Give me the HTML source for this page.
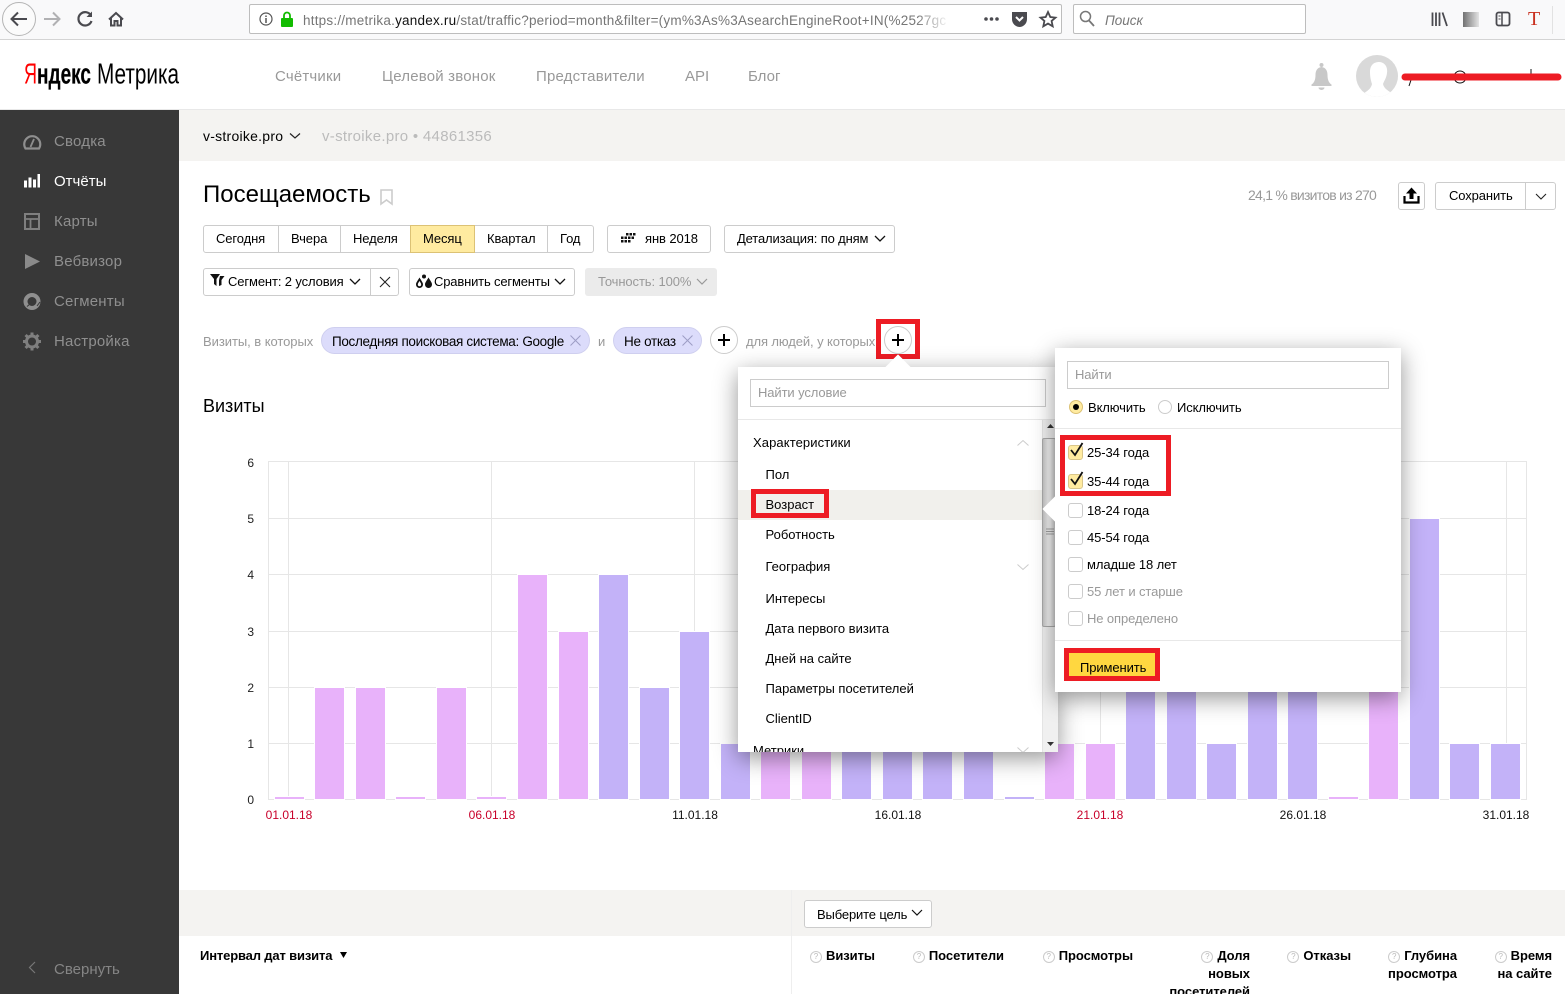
<!DOCTYPE html>
<html lang="ru"><head><meta charset="utf-8"><title>Посещаемость</title>
<style>
*{box-sizing:border-box}
html,body{margin:0;padding:0;width:1565px;height:994px;overflow:hidden;background:#fff}
body{position:relative;font-family:"Liberation Sans",Arial,sans-serif;font-size:13px;color:#000}
.a{position:absolute}
.t{position:absolute;white-space:nowrap;line-height:18px;height:18px}
.b{position:absolute;background:#fff;border:1px solid #ccc;border-radius:3px}
.g{color:#999}
svg{position:absolute;overflow:visible}
.red{position:absolute;border:5px solid #ed1c24}
.ck{position:absolute;width:15px;height:15px;border:1px solid #ccc;border-radius:3px;background:#fff;left:1068px}
.ck.on{background:#ffeba0;border-color:#d9c68a}
.m{font-size:13px;letter-spacing:-.1px}
.side{color:#8f8f8f;font-size:15px;left:54px;letter-spacing:.2px}
.nav{color:#999;font-size:15px;top:68px;letter-spacing:.18px}
.th{font-weight:bold;font-size:13px;text-align:right;line-height:18px;position:absolute;letter-spacing:-.05px}
.q{display:inline-block;width:12px;height:12px;border:1px solid #ccc;border-radius:50%;font-size:8px;line-height:10px;text-align:center;color:#bbb;font-weight:normal;vertical-align:1px;margin-right:4px}
#ch rect{stroke:#fff;stroke-width:1}
</style></head><body>

<!-- browser bar -->
<div class="a" style="left:0;top:0;width:1565px;height:40px;background:#f9f9fa;border-bottom:1px solid #d4d4d4"></div>
<div class="a" style="left:2px;top:2px;width:34px;height:34px;border:1px solid #b5b5b5;border-radius:50%;background:#fbfbfb"></div>
<svg style="left:0;top:0" width="140" height="40" fill="none" stroke-width="2">
<path d="M27 19H12M18 12.500L11.500 19L18 25.500" stroke="#4a4a4f"/>
<path d="M44 19H59M53 12.500L59.500 19L53 25.500" stroke="#b1b1b3"/>
<path d="M91 15.500A6.700 6.700 0 1 0 91.500 21" stroke="#4a4a4f" stroke-width="2.200"/>
<path d="M92 11.500V17H86.500Z" fill="#4a4a4f"/>
<path d="M109 19.500L116 13L123 19.500M111 18V25.500H114.500V21H117.500V25.500H121V18" stroke="#4a4a4f" stroke-width="2"/>
</svg>
<div class="b" style="left:249px;top:4px;width:813px;height:30px;border-radius:2px;border-color:#bdbdbd"></div>
<svg style="left:258px;top:11px" width="40" height="18" fill="none">
<circle cx="8" cy="8" r="6" stroke="#555" stroke-width="1.200"/><path d="M8 7V12M8 4.500V6" stroke="#555" stroke-width="1.500"/>
<path d="M26 7V4.500A3 3 0 0 1 32 4.500V7" stroke="#12bc00" stroke-width="1.800"/><rect x="23" y="7" width="12" height="9" rx="1" fill="#12bc00"/>
</svg>
<div class="t" style="left:303px;top:12px;width:645px;overflow:hidden;color:#767676;font-size:13.500px;letter-spacing:.22px">https://metrika.<span style="color:#111">yandex.ru</span>/stat/traffic?period=month&amp;filter=(ym%3As%3AsearchEngineRoot+IN(%2527gc</div>
<div class="a" style="left:916px;top:8px;width:34px;height:22px;background:linear-gradient(90deg,rgba(255,255,255,0),#fff)"></div>
<svg style="left:980px;top:8px" width="80" height="24" fill="none">
<circle cx="6" cy="11" r="1.800" fill="#4a4a4f"/><circle cx="11.500" cy="11" r="1.800" fill="#4a4a4f"/><circle cx="17" cy="11" r="1.800" fill="#4a4a4f"/>
<path d="M32 4H47V11C47 16 43 19 39.500 19C36 19 32 16 32 11Z" fill="#4a4a4f"/><path d="M36 9L39.500 12.500L43 9" stroke="#fff" stroke-width="2"/>
<path d="M68 4L70.300 9L75.500 9.600L71.600 13L72.700 18.300L68 15.600L63.300 18.300L64.400 13L60.500 9.600L65.700 9Z" stroke="#4a4a4f" stroke-width="1.800"/>
</svg>
<div class="b" style="left:1073px;top:4px;width:233px;height:30px;border-radius:2px;border-color:#bdbdbd"></div>
<svg style="left:1078px;top:9px" width="22" height="22" fill="none"><circle cx="7.500" cy="7.500" r="5" stroke="#777" stroke-width="1.500"/><path d="M11 11.500L16 17" stroke="#777" stroke-width="1.800"/></svg>
<div class="t" style="left:1105px;top:12px;color:#777;font-style:italic;font-size:13.500px">Поиск</div>
<svg style="left:1425px;top:8px" width="125" height="24" fill="none">
<path d="M7.500 4.500V18M11 4.500V18M14.500 4.500V18M17.500 4.500L22 18" stroke="#4a4a4f" stroke-width="1.800"/>
<defs><linearGradient id="gs" x1="0" x2="1" y1="0" y2="0"><stop offset="0" stop-color="#444"/><stop offset="1" stop-color="#ddd"/></linearGradient></defs>
<rect x="38" y="4" width="16" height="15" fill="url(#gs)" opacity=".75"/>
<rect x="71.500" y="4.500" width="13" height="13" rx="2" stroke="#4a4a4f" stroke-width="1.800"/><path d="M77 5V17" stroke="#4a4a4f" stroke-width="1.500"/><path d="M73.500 8H75.500M73.500 11H75.500" stroke="#4a4a4f"/>
</svg>
<div class="t" style="left:1528px;top:8px;font-family:'Liberation Serif',serif;font-size:20px;line-height:22px;height:22px;color:#c9301f">T</div>
<div class="a" style="left:1552px;top:6px;width:1px;height:28px;background:#e2e2e2"></div>

<!-- header -->
<div class="a" style="left:0;top:109px;width:1565px;height:1px;background:#e8e8e8"></div>
<svg style="left:0;top:50px" width="200" height="50">
<text x="24" y="33.500" font-family="'Liberation Sans',sans-serif" font-size="29" fill="#f00" textLength="13" lengthAdjust="spacingAndGlyphs">Я</text>
<text x="37" y="33.500" font-family="'Liberation Sans',sans-serif" font-size="29" font-weight="bold" fill="#000" textLength="54" lengthAdjust="spacingAndGlyphs" stroke="#000" stroke-width=".2">ндекс</text>
<text x="97" y="33.500" font-family="'Liberation Sans',sans-serif" font-size="29" fill="#000" textLength="82" lengthAdjust="spacingAndGlyphs">Метрика</text>
</svg>
<div class="t nav" style="left:275px">Счётчики</div>
<div class="t nav" style="left:382px">Целевой звонок</div>
<div class="t nav" style="left:536px">Представители</div>
<div class="t nav" style="left:685px;letter-spacing:0">API</div>
<div class="t nav" style="left:748px;letter-spacing:0">Блог</div>
<svg style="left:1305px;top:56px" width="100" height="44">
<path d="M16.500 7A2 2 0 0 0 16.500 11C12 11.500 10.500 15 10.500 19C10.500 24 9 27 6.500 28.500V30H26.500V28.500C24 27 22.500 24 22.500 19C22.500 15 21 11.500 16.500 11A2 2 0 0 0 16.500 7Z" fill="#c8c8c8"/>
<path d="M13.500 31.500H19.500A3 2.500 0 0 1 13.500 31.500Z" fill="#c8c8c8"/>
<defs><clipPath id="av"><circle cx="72" cy="20" r="21"/></clipPath></defs>
<circle cx="72" cy="20" r="21" fill="#d9d9d9"/>
<g clip-path="url(#av)"><path d="M65 16C65 8 70 6 74 6C79 6 83 10 82 17C81.500 22 79 25 78 28C79 33 84 35 88 38V44H58V38C62 35 66 33 67 28C66 25 65 21 65 16Z" fill="#fff"/></g>
</svg>
<svg style="left:1400px;top:66px" width="165" height="24" fill="none">
<circle cx="60" cy="11" r="6" stroke="#111" stroke-width="1"/><path d="M131 3V8M11 14L9 20" stroke="#111"/>
<path d="M5 11H158" stroke="#ed1c24" stroke-width="7" stroke-linecap="round"/>
</svg>

<!-- sidebar -->
<div class="a" style="left:0;top:110px;width:179px;height:884px;background:#383838"></div>
<svg style="left:20px;top:130px" width="26" height="224" fill="none">
<path d="M5.500 18.500A8 8 0 1 1 19 18.500Z" stroke="#8f8f8f" stroke-width="2.200"/><path d="M10.500 17L14 9" stroke="#8f8f8f" stroke-width="1.800"/>
<path d="M4 51H7V58H4ZM8.500 48H11.500V58H8.500ZM13 50H16V58H13ZM17.500 44.500H20V58H17.500Z" fill="#fff" transform="translate(0 -.5)"/>
<rect x="5" y="84" width="14" height="15" stroke="#7f7f7f" stroke-width="2"/><path d="M5 89H19M10.500 89V99" stroke="#7f7f7f" stroke-width="1.800"/>
<path d="M5 124L20 131.500L5 139Z" fill="#8a8a8a"/>
<circle cx="12" cy="171.500" r="6.500" stroke="#8f8f8f" stroke-width="4"/><path d="M17 176L20 172" stroke="#383838" stroke-width="1"/><path d="M7 176.500L10 174" stroke="#383838" stroke-width="1"/>
<circle cx="12" cy="211.500" r="5.500" stroke="#7f7f7f" stroke-width="3"/><path d="M12 202.500V205.500M12 217.500V220.500M3 211.500H6M18 211.500H21M5.600 205L7.800 207.300M16.200 215.700L18.400 218M18.400 205L16.200 207.300M7.800 215.700L5.600 218" stroke="#7f7f7f" stroke-width="3"/>
</svg>
<div class="t side" style="top:133px">Сводка</div>
<div class="t side" style="top:173px;color:#fff;letter-spacing:0">Отчёты</div>
<div class="t side" style="top:213px">Карты</div>
<div class="t side" style="top:253px">Вебвизор</div>
<div class="t side" style="top:293px">Сегменты</div>
<div class="t side" style="top:333px">Настройка</div>
<svg style="left:28px;top:961px" width="10" height="14" fill="none"><path d="M7 1L1.500 6.500L7 12" stroke="#777" stroke-width="1.200"/></svg>
<div class="t side" style="top:961px;color:#858585;letter-spacing:0">Свернуть</div>

<!-- top strip -->
<div class="a" style="left:179px;top:110px;width:1386px;height:51px;background:#f4f3f1"></div>
<div class="t" style="left:203px;top:127px;font-size:14px;letter-spacing:.25px">v-stroike.pro</div>
<svg style="left:289px;top:132px" width="12" height="8" fill="none"><path d="M1 1.500L6 6L11 1.500" stroke="#222" stroke-width="1.200"/></svg>
<div class="t" style="left:322px;top:128px;font-size:15px;color:#bbb;letter-spacing:.3px">v-stroike.pro • 44861356</div>

<!-- title -->
<div class="t" style="left:203px;top:179px;font-size:24px;line-height:32px;height:32px">Посещаемость</div>
<svg style="left:380px;top:189px" width="13" height="17" fill="none"><path d="M1 1H12V15L6.500 11L1 15Z" stroke="#ccc" stroke-width="1.600"/></svg>
<div class="t g" style="left:1248px;top:186px;font-size:14px;letter-spacing:-.75px">24,1 % визитов из 270</div>
<div class="b" style="left:1398px;top:182px;width:27px;height:28px"></div>
<svg style="left:1402px;top:186px" width="20" height="20"><path d="M9.500 1.500L15 7.500H11.500V13H7.500V7.500H4Z" fill="#000"/><path d="M2.500 10V16.500H16.500V10" fill="none" stroke="#000" stroke-width="2.200"/></svg>
<div class="b" style="left:1435px;top:182px;width:121px;height:28px"></div>
<div class="a" style="left:1525px;top:183px;width:1px;height:26px;background:#ccc"></div>
<div class="t m" style="left:1449px;top:187px">Сохранить</div>
<svg style="left:1535px;top:193px" width="12" height="8" fill="none"><path d="M1 1L6 6L11 1" stroke="#222" stroke-width="1.100"/></svg>

<!-- period buttons -->
<div class="b" style="left:203px;top:225px;width:391px;height:28px"></div>
<div class="a" style="left:410px;top:225px;width:65px;height:28px;background:#ffeba0;border:1px solid #dcc275"></div>
<div class="a" style="left:278px;top:226px;width:1px;height:26px;background:#ccc"></div>
<div class="a" style="left:340px;top:226px;width:1px;height:26px;background:#ccc"></div>
<div class="a" style="left:547px;top:226px;width:1px;height:26px;background:#ccc"></div>
<div class="t m" style="left:216px;top:230px">Сегодня</div>
<div class="t m" style="left:291px;top:230px">Вчера</div>
<div class="t m" style="left:353px;top:230px">Неделя</div>
<div class="t m" style="left:423px;top:230px">Месяц</div>
<div class="t m" style="left:487px;top:230px">Квартал</div>
<div class="t m" style="left:560px;top:230px">Год</div>
<div class="b" style="left:607px;top:225px;width:104px;height:28px"></div>
<svg style="left:620px;top:232px" width="16" height="13" fill="#111"><path d="M6 1h2.500v2.500H6zM9.500 1H12v2.500H9.500zM13 1h2.500v2.500H13zM1 4.500h2.500V7H1zM4.500 4.500H7V7H4.500zM8 4.500h2.500V7H8zM11.500 4.500H14V7h-2.500zM1 8h2.500v2.500H1zM4.500 8H7v2.500H4.500zM8 8h2.500v2.500H8z"/></svg>
<div class="t m" style="left:645px;top:230px">янв 2018</div>
<div class="b" style="left:724px;top:225px;width:171px;height:28px"></div>
<div class="t m" style="left:737px;top:230px;letter-spacing:-.15px">Детализация: по дням</div>
<svg style="left:874px;top:235px" width="12" height="8" fill="none"><path d="M1 1L6 6L11 1" stroke="#111" stroke-width="1.300"/></svg>

<!-- segment row -->
<div class="b" style="left:203px;top:268px;width:196px;height:28px"></div>
<div class="a" style="left:370px;top:269px;width:1px;height:26px;background:#ccc"></div>
<svg style="left:209px;top:273px" width="18" height="15"><path d="M1 1H11L7.500 6V13L5 11V6Z" fill="#111"/><path d="M11 3H15.500L12.500 7V12L10 13V7.500Z" fill="#111"/></svg>
<div class="t m" style="left:228px;top:273px;letter-spacing:-.12px">Сегмент: 2 условия</div>
<svg style="left:349px;top:278px" width="12" height="8" fill="none"><path d="M1 1L6 6L11 1" stroke="#111" stroke-width="1.300"/></svg>
<svg style="left:379px;top:276px" width="12" height="12" fill="none"><path d="M1 1L11 11M11 1L1 11" stroke="#222" stroke-width="1.100"/></svg>
<div class="b" style="left:409px;top:268px;width:166px;height:28px"></div>
<svg style="left:415px;top:274px" width="18" height="16" fill="#111"><path d="M4.500 3.500C6.500 7 8 8.500 8 10.500A3.500 3.500 0 0 1 1 10.500C1 8.500 2.500 7 4.500 3.500ZM4.500 7C3.500 8.800 2.800 9.500 2.800 10.500A1.700 1.700 0 0 0 6.200 10.500C6.200 9.500 5.500 8.800 4.500 7Z" fill-rule="evenodd"/><path d="M13.500 3.500C15.500 7 17 8.500 17 10.500A3.500 3.500 0 0 1 10 10.500C10 8.500 11.500 7 13.500 3.500Z"/><circle cx="9" cy="2.500" r="2"/></svg>
<div class="t m" style="left:434px;top:273px;letter-spacing:-.17px">Сравнить сегменты</div>
<svg style="left:554px;top:278px" width="12" height="8" fill="none"><path d="M1 1L6 6L11 1" stroke="#111" stroke-width="1.300"/></svg>
<div class="a" style="left:585px;top:268px;width:132px;height:28px;background:#ebebeb;border-radius:3px"></div>
<div class="t m" style="left:598px;top:273px;color:#999">Точность: 100%</div>
<svg style="left:696px;top:278px" width="12" height="8" fill="none"><path d="M1 1L6 6L11 1" stroke="#999" stroke-width="1.200"/></svg>

<!-- filters -->
<div class="t g" style="left:203px;top:333px;font-size:13px;letter-spacing:-.05px">Визиты, в которых</div>
<div class="a" style="left:321px;top:327px;width:269px;height:27px;border-radius:14px;background:#dcdcfb;border:1px solid #cfcfef"></div>
<div class="t" style="left:332px;top:333px;font-size:13.500px;letter-spacing:-.33px">Последняя поисковая система: Google</div>
<svg style="left:570px;top:335px" width="11" height="11" fill="none"><path d="M.5 .5L10.500 10.500M10.500 .5L.5 10.500" stroke="#9d9dc4"/></svg>
<div class="t g" style="left:598px;top:333px">и</div>
<div class="a" style="left:613px;top:327px;width:89px;height:27px;border-radius:14px;background:#dcdcfb;border:1px solid #cfcfef"></div>
<div class="t" style="left:624px;top:333px;font-size:13.500px;letter-spacing:-.3px">Не отказ</div>
<svg style="left:682px;top:335px" width="11" height="11" fill="none"><path d="M.5 .5L10.500 10.500M10.500 .5L.5 10.500" stroke="#9d9dc4"/></svg>
<div class="a" style="left:710px;top:326px;width:28px;height:28px;border:1px solid #ccc;border-radius:50%"></div>
<svg style="left:718px;top:334px" width="12" height="12"><path d="M6 0V12M0 6H12" stroke="#000" stroke-width="2"/></svg>
<div class="t g" style="left:746px;top:333px;font-size:13px;letter-spacing:-.1px">для людей, у которых</div>

<!-- chart -->
<div class="t" style="left:203px;top:395px;font-size:18px;line-height:22px;height:22px">Визиты</div>
<svg style="left:0;top:0" width="1565" height="994" id="ch" font-family="'Liberation Sans',sans-serif" font-size="12">
<g fill="none" stroke="#e6e6e6">
<path d="M268.500 461.500H1526.500V799.500H268.500Z"/>
<path d="M268 518.500H1527M268 574.500H1527M268 631.500H1527M268 687.500H1527M268 743.500H1527"/>
<path d="M288.500 461V799M491.500 461V799M694.500 461V799M897.500 461V799M1100.500 461V799M1303.500 461V799M1506.500 461V799"/>
</g>
<g>
<rect x="274.500" y="796.500" width="30" height="3" fill="#e8b2fa"/>
<rect x="314.500" y="687.500" width="30" height="112" fill="#e8b2fa"/>
<rect x="355.500" y="687.500" width="30" height="112" fill="#e8b2fa"/>
<rect x="395.500" y="796.500" width="30" height="3" fill="#e8b2fa"/>
<rect x="436.500" y="687.500" width="30" height="112" fill="#e8b2fa"/>
<rect x="476.500" y="796.500" width="30" height="3" fill="#e8b2fa"/>
<rect x="517.500" y="574.500" width="30" height="225" fill="#e8b2fa"/>
<rect x="558.500" y="631.500" width="30" height="168" fill="#e8b2fa"/>
<rect x="598.500" y="574.500" width="30" height="225" fill="#c3b2f8"/>
<rect x="639.500" y="687.500" width="30" height="112" fill="#c3b2f8"/>
<rect x="679.500" y="631.500" width="30" height="168" fill="#c3b2f8"/>
<rect x="720.500" y="743.500" width="30" height="56" fill="#c3b2f8"/>
<rect x="760.500" y="743.500" width="30" height="56" fill="#e8b2fa"/>
<rect x="801.500" y="743.500" width="30" height="56" fill="#e8b2fa"/>
<rect x="841.500" y="743.500" width="30" height="56" fill="#c3b2f8"/>
<rect x="882.500" y="743.500" width="30" height="56" fill="#c3b2f8"/>
<rect x="922.500" y="743.500" width="30" height="56" fill="#c3b2f8"/>
<rect x="963.500" y="743.500" width="30" height="56" fill="#c3b2f8"/>
<rect x="1004.500" y="796.500" width="30" height="3" fill="#c3b2f8"/>
<rect x="1044.500" y="743.500" width="30" height="56" fill="#e8b2fa"/>
<rect x="1085.500" y="743.500" width="30" height="56" fill="#e8b2fa"/>
<rect x="1125.500" y="631.500" width="30" height="168" fill="#c3b2f8"/>
<rect x="1166.500" y="631.500" width="30" height="168" fill="#c3b2f8"/>
<rect x="1206.500" y="743.500" width="30" height="56" fill="#c3b2f8"/>
<rect x="1247.500" y="631.500" width="30" height="168" fill="#c3b2f8"/>
<rect x="1287.500" y="631.500" width="30" height="168" fill="#c3b2f8"/>
<rect x="1328.500" y="796.500" width="30" height="3" fill="#e8b2fa"/>
<rect x="1368.500" y="631.500" width="30" height="168" fill="#e8b2fa"/>
<rect x="1409.500" y="518.500" width="30" height="281" fill="#c3b2f8"/>
<rect x="1449.500" y="743.500" width="30" height="56" fill="#c3b2f8"/>
<rect x="1490.500" y="743.500" width="30" height="56" fill="#c3b2f8"/>
</g>
<g fill="#222" text-anchor="end">
<text x="254" y="467">6</text><text x="254" y="523">5</text><text x="254" y="579">4</text><text x="254" y="636">3</text><text x="254" y="692">2</text><text x="254" y="748">1</text><text x="254" y="804">0</text>
</g>
<g text-anchor="middle">
<text x="289" y="819" fill="#c8002a">01.01.18</text>
<text x="492" y="819" fill="#c8002a">06.01.18</text>
<text x="695" y="819" fill="#111">11.01.18</text>
<text x="898" y="819" fill="#111">16.01.18</text>
<text x="1100" y="819" fill="#c8002a">21.01.18</text>
<text x="1303" y="819" fill="#111">26.01.18</text>
<text x="1506" y="819" fill="#111">31.01.18</text>
</g>
</svg>

<!-- table top -->
<div class="a" style="left:179px;top:890px;width:1386px;height:46px;background:#f4f3f1"></div>
<div class="a" style="left:791px;top:890px;width:1px;height:104px;background:#eee"></div>
<div class="b" style="left:804px;top:900px;width:128px;height:28px"></div>
<div class="t m" style="left:817px;top:906px;letter-spacing:-.15px">Выберите цель</div>
<svg style="left:911px;top:909px" width="12" height="8" fill="none"><path d="M1 1L6 6L11 1" stroke="#111" stroke-width="1.200"/></svg>
<div class="t" style="left:200px;top:947px;font-weight:bold;font-size:13px;letter-spacing:-.15px">Интервал дат визита</div>
<svg style="left:340px;top:952px" width="7" height="6"><path d="M0 0H7L3.500 6Z" fill="#000"/></svg>
<div class="a" style="left:0;top:0;width:1565px;height:994px;overflow:hidden">
<div class="th" style="left:790px;width:85px;top:947px"><span class="q">?</span>Визиты</div>
<div class="th" style="left:890px;width:114px;top:947px"><span class="q">?</span>Посетители</div>
<div class="th" style="left:1020px;width:113px;top:947px"><span class="q">?</span>Просмотры</div>
<div class="th" style="left:1150px;width:100px;top:947px"><span class="q">?</span>Доля<br>новых<br>посетителей</div>
<div class="th" style="left:1270px;width:81px;top:947px"><span class="q">?</span>Отказы</div>
<div class="th" style="left:1370px;width:87px;top:947px"><span class="q">?</span>Глубина<br>просмотра</div>
<div class="th" style="left:1480px;width:72px;top:947px"><span class="q">?</span>Время<br>на сайте</div>
</div>

<!-- red highlight around second plus -->
<div class="a" style="left:884px;top:326px;width:28px;height:28px;border:1px solid #ccc;border-radius:50%;background:#fff"></div>
<svg style="left:892px;top:334px" width="12" height="12"><path d="M6 0V12M0 6H12" stroke="#000" stroke-width="2"/></svg>
<div class="red" style="left:876px;top:319px;width:44px;height:40px"></div>

<!-- panel 1 -->
<div class="a" style="left:738px;top:367px;width:320px;height:385px;background:#fff;box-shadow:0 6px 22px rgba(0,0,0,.42)"></div>
<div class="a" style="left:889px;top:358px;width:18px;height:18px;background:#fff;transform:rotate(45deg);clip-path:polygon(0 0,100% 0,0 100%);box-shadow:0 0 3px #ddd"></div>
<div class="a" style="left:738px;top:367px;width:320px;height:385px;overflow:hidden">
<div class="a" style="left:12px;top:12px;width:296px;height:28px;border:1px solid #ccc"></div>
<div class="t m" style="left:20px;top:17px;color:#999">Найти условие</div>
<div class="a" style="left:0;top:52px;width:320px;height:1px;background:#e8e8e8"></div>
<div class="a" style="left:0;top:123px;width:304px;height:30px;background:#f1f0ec"></div>
<div class="t" style="left:15px;top:67px;letter-spacing:.1px">Характеристики</div>
<svg style="left:279px;top:72px" width="12" height="8" fill="none"><path d="M.5 6.500L6 1.500L11.500 6.500" stroke="#ccc"/></svg>
<div class="t" style="left:27.500px;top:99px">Пол</div>
<div class="t" style="left:27.500px;top:129px">Возраст</div>
<div class="t" style="left:27.500px;top:159px">Роботность</div>
<div class="t" style="left:27.500px;top:191px">География</div>
<svg style="left:279px;top:196px" width="12" height="8" fill="none"><path d="M.5 1.500L6 6.500L11.500 1.500" stroke="#ccc"/></svg>
<div class="t" style="left:27.500px;top:223px">Интересы</div>
<div class="t" style="left:27.500px;top:253px">Дата первого визита</div>
<div class="t" style="left:27.500px;top:283px">Дней на сайте</div>
<div class="t" style="left:27.500px;top:313px">Параметры посетителей</div>
<div class="t" style="left:27.500px;top:343px">ClientID</div>
<div class="t" style="left:15px;top:375px">Метрики</div>
<svg style="left:279px;top:379px" width="12" height="8" fill="none"><path d="M.5 1.500L6 6.500L11.500 1.500" stroke="#ccc"/></svg>
<!-- scrollbar -->
<div class="a" style="left:304px;top:53px;width:16px;height:332px;background:#f0f0f0;border-left:1px solid #e4e4e4"></div>
<div class="a" style="left:304px;top:71px;width:14px;height:189px;background:linear-gradient(90deg,#c4c4c4,#eee 40%,#f2f2f2 60%,#ccc);border:1px solid #a9a9a9;border-radius:2px"></div>
<svg style="left:304px;top:53px" width="16" height="332"><path d="M5 8L8.500 4L12 8Z" fill="#333"/><path d="M5 322H12L8.500 326Z" fill="#333"/><path d="M4 109H12M4 111.500H12M4 114H12" stroke="#888" stroke-width=".8"/></svg>
</div>
<div class="red" style="left:751px;top:489px;width:78px;height:29px"></div>

<!-- panel 2 -->
<div class="a" style="left:1055px;top:348px;width:346px;height:344px;background:#fff;box-shadow:0 6px 22px rgba(0,0,0,.42)"></div>
<div class="a" style="left:1046px;top:500px;width:18px;height:18px;background:#fff;transform:rotate(45deg);clip-path:polygon(0 100%,0 0,100% 100%)"></div>
<div class="a" style="left:1067px;top:361px;width:322px;height:28px;border:1px solid #ccc"></div>
<div class="t m" style="left:1075px;top:366px;color:#999">Найти</div>
<div class="a" style="left:1069px;top:400px;width:14px;height:14px;border-radius:50%;background:#ffeba0;border:1px solid #dcc275"></div>
<div class="a" style="left:1073px;top:404px;width:6px;height:6px;border-radius:50%;background:#000"></div>
<div class="t" style="left:1088px;top:399px;letter-spacing:-.1px">Включить</div>
<div class="a" style="left:1158px;top:400px;width:14px;height:14px;border-radius:50%;background:#fff;border:1px solid #ccc"></div>
<div class="t" style="left:1177px;top:399px;letter-spacing:-.1px">Исключить</div>
<div class="a" style="left:1055px;top:428px;width:346px;height:1px;background:#e8e8e8"></div>
<div class="ck on" style="top:445px"></div>
<div class="ck on" style="top:474px"></div>
<svg style="left:1068px;top:441px" width="20" height="50" fill="none"><path d="M3 9L7 14L14.500 2" stroke="#111" stroke-width="1.800"/><path d="M3 38L7 43L14.500 31" stroke="#111" stroke-width="1.800"/></svg>
<div class="ck" style="top:503px"></div>
<div class="ck" style="top:530px"></div>
<div class="ck" style="top:557px"></div>
<div class="ck" style="top:584px"></div>
<div class="ck" style="top:611px"></div>
<div class="t m" style="left:1087px;top:444px">25-34 года</div>
<div class="t m" style="left:1087px;top:473px">35-44 года</div>
<div class="t m" style="left:1087px;top:502px">18-24 года</div>
<div class="t m" style="left:1087px;top:529px">45-54 года</div>
<div class="t m" style="left:1087px;top:556px">младше 18 лет</div>
<div class="t m g" style="left:1087px;top:583px">55 лет и старше</div>
<div class="t m g" style="left:1087px;top:610px">Не определено</div>
<div class="a" style="left:1055px;top:640px;width:346px;height:1px;background:#e8e8e8"></div>
<div class="a" style="left:1069px;top:653px;width:86px;height:24px;background:#ffd740"></div>
<div class="t" style="left:1080px;top:659px;font-size:13px;letter-spacing:-.1px">Применить</div>
<div class="red" style="left:1060px;top:435px;width:111px;height:61px"></div>
<div class="red" style="left:1064px;top:648px;width:96px;height:33px"></div>
</body></html>
